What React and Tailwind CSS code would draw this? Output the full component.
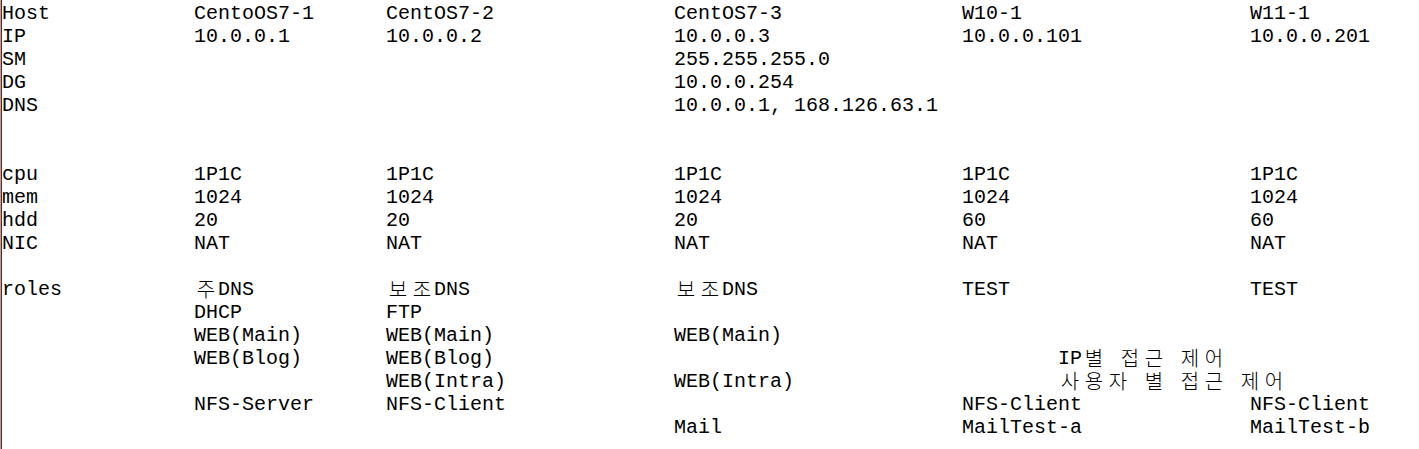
import React from 'react';

const rows = [
  ['Host', 'CentoOS7-1', 'CentOS7-2', 'CentOS7-3', 'W10-1', 'W11-1'],
  ['IP', '10.0.0.1', '10.0.0.2', '10.0.0.3', '10.0.0.101', '10.0.0.201'],
  ['SM', '', '', '255.255.255.0', '', ''],
  ['DG', '', '', '10.0.0.254', '', ''],
  ['DNS', '', '', '10.0.0.1, 168.126.63.1', '', ''],
  [],
  [],
  ['cpu', '1P1C', '1P1C', '1P1C', '1P1C', '1P1C'],
  ['mem', '1024', '1024', '1024', '1024', '1024'],
  ['hdd', '20', '20', '20', '60', '60'],
  ['NIC', 'NAT', 'NAT', 'NAT', 'NAT', 'NAT'],
  [],
  ['roles', '주DNS', '보조DNS', '보조DNS', 'TEST', 'TEST'],
  ['', 'DHCP', 'FTP', '', '', ''],
  ['', 'WEB(Main)', 'WEB(Main)', 'WEB(Main)', '', ''],
  ['', 'WEB(Blog)', 'WEB(Blog)', '', '        IP별 접근 제어', ''],
  ['', '', 'WEB(Intra)', 'WEB(Intra)', '        사용자 별 접근 제어', ''],
  ['', 'NFS-Server', 'NFS-Client', '', 'NFS-Client', 'NFS-Client'],
  ['', '', '', 'Mail', 'MailTest-a', 'MailTest-b'],
];

// fixed-pitch text: half-width chars take 12px, hangul takes 24px
function Mono({ text }) {
  return (
    <span className="whitespace-pre">
      {Array.from(text).map((ch, i) =>
        ch.charCodeAt(0) > 0x1100 ? (
          <span
            key={i}
            className="relative top-[-1px] inline-block h-[23px] w-[24px] align-top text-center font-['Noto_Sans_CJK_KR',sans-serif] text-[20px] font-light leading-[23px]"
          >
            {ch}
          </span>
        ) : (
          <span key={i} className="inline-block h-[23px] w-[12px] align-top">
            {ch === ' ' ? '\u00a0' : ch}
          </span>
        )
      )}
    </span>
  );
}

export default function App() {
  return (
    <div className="flex h-[449px] w-[1419px] overflow-hidden bg-white text-black">
      <div className="w-px shrink-0 bg-[#e48c8c]" />
      <div className="w-px shrink-0 bg-[#3a3a3a]" />
      <div className="flex flex-col pt-[2px] font-['Liberation_Mono',monospace] text-[20px] leading-[23px]">
        {rows.map((row, r) => (
          <div key={r} className="grid h-[23px] grid-cols-[192px_192px_288px_288px_288px_1fr]">
            {row.map((cell, c) => (
              <div key={c} className="h-[23px] whitespace-pre">
                <Mono text={cell} />
              </div>
            ))}
          </div>
        ))}
      </div>
    </div>
  );
}
